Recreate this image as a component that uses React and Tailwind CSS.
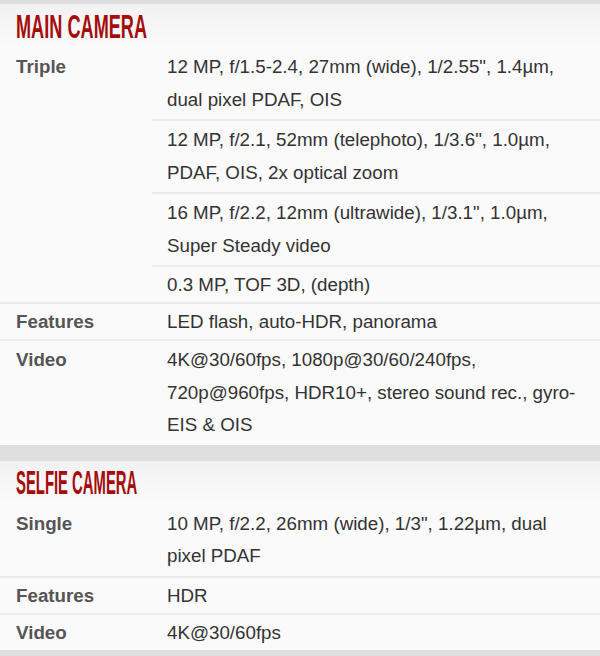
import React from "react";

const main = [
  { label: "Triple", values: [
    ["12 MP, f/1.5-2.4, 27mm (wide), 1/2.55\", 1.4µm,", "dual pixel PDAF, OIS"],
    ["12 MP, f/2.1, 52mm (telephoto), 1/3.6\", 1.0µm,", "PDAF, OIS, 2x optical zoom"],
    ["16 MP, f/2.2, 12mm (ultrawide), 1/3.1\", 1.0µm,", "Super Steady video"],
    ["0.3 MP, TOF 3D, (depth)"],
  ]},
  { label: "Features", values: [["LED flash, auto-HDR, panorama"]] },
  { label: "Video", values: [["4K@30/60fps, 1080p@30/60/240fps,", "720p@960fps, HDR10+, stereo sound rec., gyro-", "EIS & OIS"]] },
];

const selfie = [
  { label: "Single", values: [["10 MP, f/2.2, 26mm (wide), 1/3\", 1.22µm, dual", "pixel PDAF"]] },
  { label: "Features", values: [["HDR"]] },
  { label: "Video", values: [["4K@30/60fps"]] },
];

function Section({ title, titleClass, rows }) {
  return (
    <div>
      <div className="h-[44px] bg-gradient-to-b from-[#f2f2f2] to-[#fafafa] flex items-center pl-[16px]">
        <span className={"inline-block origin-left text-[#a50d0d] font-bold text-[33px] leading-none " + titleClass} style={{ fontFamily: '"Liberation Sans Narrow", "Liberation Sans", sans-serif' }}>
          {title}
        </span>
      </div>
      {rows.map((r, i) => {
        const firstMulti = r.values[0].length > 1;
        return (
          <div key={i} className={"flex " + (i > 0 ? "border-t-2 border-[#ececec]" : "")}>
            <div className={"w-[152px] shrink-0 pl-[16px] text-[18.75px] font-bold text-[#555] " + (firstMulti ? "pt-[3px] leading-[32.5px]" : "pt-[1px] leading-[33px]")}>
              {r.label}
            </div>
            <div className="flex-1">
              {r.values.map((v, j) => (
                <div key={j} className={"pl-[15px] pr-[4px] text-[18.75px] text-[#333] " + (v.length > 1 ? "pt-[3px] pb-[3px] leading-[32.5px] " : "pt-[1px] pb-[1px] leading-[33px] ") + (j > 0 ? "border-t-2 border-[#ececec]" : "")}>
                  {v.map((line, k) => (
                    <div key={k} className="whitespace-nowrap">{line}</div>
                  ))}
                </div>
              ))}
            </div>
          </div>
        );
      })}
    </div>
  );
}

export default function App() {
  return (
    <div className="w-[600px] h-[656px] overflow-hidden bg-[#fafafa]" style={{ fontFamily: '"Liberation Sans", Arial, sans-serif' }}>
      <div className="h-[4px] bg-[#dedede]" />
      <Section title="MAIN CAMERA" titleClass="scale-x-[0.55]" rows={main} />
      <div className="h-[16px] bg-[#dedede]" />
      <Section title="SELFIE CAMERA" titleClass="scale-x-[0.45]" rows={selfie} />
      <div className="h-[6px] bg-[#dedede]" />
    </div>
  );
}
